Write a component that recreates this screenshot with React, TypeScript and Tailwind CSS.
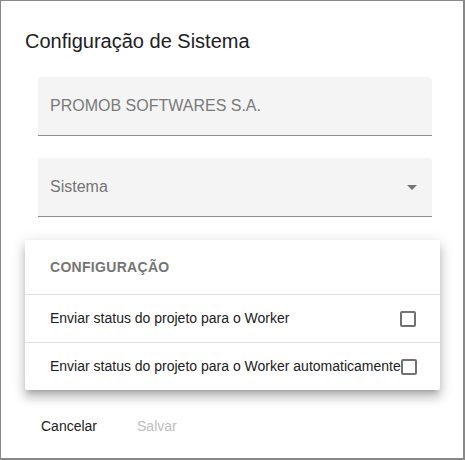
import React from "react";

function Checkbox() {
  return <div className="w-[16px] h-[16px] shrink-0 border-2 border-[#717171] rounded-[2px] bg-white" />;
}

export default function App() {
  return (
    <div
      className="w-[465px] h-[460px] bg-white border-t border-l border-r-2 border-b-2 border-[#888888] text-[#212121]"
      style={{ fontFamily: '"Liberation Sans", Arial, sans-serif' }}
    >
      <div className="pl-[24px] pt-[24px]">
        <h1 className="text-[20px] leading-[32px] font-normal text-[#212121]">Configuração de Sistema</h1>
      </div>

      <div className="mt-[20px] ml-[37px] w-[394px] flex flex-col gap-[22px]">
        <div className="h-[59px] bg-[#f4f4f4] rounded-t-[4px] border-b border-[#8c8c8c] flex items-center pl-[12px]">
          <span className="text-[16px] text-[#7a7a7a]">PROMOB SOFTWARES S.A.</span>
        </div>
        <div className="h-[59px] bg-[#f4f4f4] rounded-t-[4px] border-b border-[#8c8c8c] flex items-center pl-[12px] pr-[8px]">
          <span className="text-[16px] text-[#757575] flex-1">Sistema</span>
          <svg width="24" height="24" viewBox="0 0 24 24" className="shrink-0">
            <path d="M7 10l5 5 5-5z" fill="#757575" />
          </svg>
        </div>
      </div>

      <div className="mt-[23px] ml-[24px] w-[415px] bg-white rounded-[2px] shadow-[0px_5px_5px_-3px_rgba(0,0,0,0.2),0px_8px_10px_1px_rgba(0,0,0,0.14),0px_3px_14px_2px_rgba(0,0,0,0.12)]">
        <div className="h-[55px] flex items-center pl-[25px] border-b border-[#e0e0e0]">
          <span className="text-[14px] font-bold text-[#757575] tracking-[0.3px]">CONFIGURAÇÃO</span>
        </div>
        <div className="h-[48px] flex items-center pl-[25px] pr-[24px] border-b border-[#e0e0e0]">
          <span className="text-[14px] text-[#212121] whitespace-nowrap flex-1">Enviar status do projeto para o Worker</span>
          <Checkbox />
        </div>
        <div className="h-[47px] flex items-center pl-[25px] pr-[24px]">
          <span className="text-[14px] text-[#212121] whitespace-nowrap flex-1 overflow-visible">Enviar status do projeto para o Worker automaticamente</span>
          <Checkbox />
        </div>
      </div>

      <div className="mt-[18px] ml-[24px] flex gap-[8px]">
        <button className="h-[36px] px-[16px] text-[14px] text-[#212121] bg-transparent">Cancelar</button>
        <button className="h-[36px] px-[16px] text-[14px] text-[#bdbdbd] bg-transparent" disabled>Salvar</button>
      </div>
    </div>
  );
}
